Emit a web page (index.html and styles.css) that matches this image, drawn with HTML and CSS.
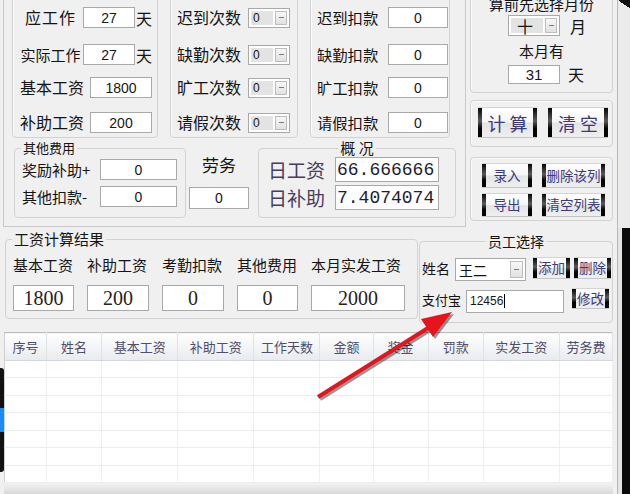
FILE: index.html
```html
<!DOCTYPE html>
<html>
<head>
    <title>工资计算</title>
    <meta charset="utf-8">
    <link rel="stylesheet" href="styles.css">
</head>
<body>
<div class="screen">
    <div class="app">
        <div class="top">
            <div class="frame">
                <div class="row-a">
                    <div class="box box-work">
                        <div class="rows">
                            <div class="row"><span class="lbl-work big">应工作</span><input class="in in-day" value="27"><span class="unit">天</span></div>
                            <div class="row"><span class="lbl-work">实际工作</span><input class="in in-day" value="27"><span class="unit">天</span></div>
                            <div class="row"><span class="lbl-pay">基本工资</span><input class="in in-pay" value="1800"></div>
                            <div class="row"><span class="lbl-pay">补助工资</span><input class="in in-pay" value="200"></div>
                        </div>
                    </div>
                    <div class="box box-count">
                        <div class="rows">
                            <div class="row"><span class="lbl-count">迟到次数</span><div class="combo combo-count"><span class="val">0</span><span class="drop"></span></div></div>
                            <div class="row"><span class="lbl-count">缺勤次数</span><div class="combo combo-count"><span class="val">0</span><span class="drop"></span></div></div>
                            <div class="row"><span class="lbl-count">旷工次数</span><div class="combo combo-count"><span class="val">0</span><span class="drop"></span></div></div>
                            <div class="row"><span class="lbl-count">请假次数</span><div class="combo combo-count"><span class="val">0</span><span class="drop"></span></div></div>
                        </div>
                    </div>
                    <div class="box box-deduct">
                        <div class="rows">
                            <div class="row"><span class="lbl-deduct">迟到扣款</span><input class="in in-deduct" value="0"></div>
                            <div class="row"><span class="lbl-deduct">缺勤扣款</span><input class="in in-deduct" value="0"></div>
                            <div class="row"><span class="lbl-deduct">旷工扣款</span><input class="in in-deduct" value="0"></div>
                            <div class="row"><span class="lbl-deduct">请假扣款</span><input class="in in-deduct" value="0"></div>
                        </div>
                    </div>
                </div>
                <div class="row-b">
                    <fieldset class="group other">
                        <legend>其他费用</legend>
                        <div class="other-body">
                            <div class="row"><span class="lbl-other">奖励补助+</span><input class="in in-other" value="0"></div>
                            <div class="row"><span class="lbl-other">其他扣款-</span><input class="in in-other" value="0"></div>
                        </div>
                    </fieldset>
                    <div class="labor">
                        <div class="labor-title">劳务</div>
                        <input class="in in-labor" value="0">
                    </div>
                    <fieldset class="group summary">
                        <legend>概 况</legend>
                        <div class="summary-body">
                            <div class="row"><span class="lbl-sum">日工资</span><input class="in in-mono" value="66.666666"></div>
                            <div class="row"><span class="lbl-sum">日补助</span><input class="in in-mono" value="7.4074074"></div>
                        </div>
                    </fieldset>
                </div>
            </div>
            <div class="side">
                <div class="box month">
                    <div class="month-title">算前先选择月份</div>
                    <div class="month-row">
                        <div class="combo combo-month"><span class="val">十</span><span class="drop"></span></div>
                        <span class="unit-m">月</span>
                    </div>
                    <div class="month-sub">本月有</div>
                    <div class="month-row days">
                        <input class="in in-month" value="31">
                        <span class="unit-d">天</span>
                    </div>
                </div>
                <div class="box calc">
                    <button class="skin btn-big">计 算</button>
                    <button class="skin btn-big">清 空</button>
                </div>
                <div class="box list">
                    <button class="skin">录入</button>
                    <button class="skin">删除该列</button>
                    <button class="skin">导出</button>
                    <button class="skin">清空列表</button>
                </div>
            </div>
        </div>

        <div class="middle">
            <fieldset class="group result">
                <legend>工资计算结果</legend>
                <div class="result-body">
                    <span>基本工资</span>
                    <span>补助工资</span>
                    <span>考勤扣款</span>
                    <span>其他费用</span>
                    <span>本月实发工资</span>
                    <input class="in in-big" value="1800">
                    <input class="in in-big" value="200">
                    <input class="in in-big" value="0">
                    <input class="in in-big" value="0">
                    <input class="in in-big" value="2000">
                </div>
            </fieldset>
            <fieldset class="group staff">
                <legend>员工选择</legend>
                <div class="staff-body">
                    <div class="staff-row">
                        <span class="lbl-name">姓名</span>
                        <div class="combo combo-name"><span class="val">王二</span><span class="drop"></span></div>
                        <button class="skin btn-sm">添加</button>
                        <button class="skin btn-sm">删除</button>
                    </div>
                    <div class="staff-row second">
                        <span class="lbl-alipay">支付宝</span>
                        <div class="in in-alipay">12456<span class="caret"></span></div>
                        <button class="skin btn-sm btn-edit">修改</button>
                    </div>
                </div>
            </fieldset>
        </div>

        <div class="table-wrap">
            <table>
                <colgroup>
                    <col style="width:42px"><col style="width:55px"><col style="width:76px"><col style="width:76px"><col style="width:66px">
                    <col style="width:53px"><col style="width:55px"><col style="width:55px"><col style="width:76px"><col style="width:53px">
                </colgroup>
                <thead>
                <tr>
                    <th>序号</th><th>姓名</th><th>基本工资</th><th>补助工资</th><th>工作天数</th>
                    <th>金额</th><th>奖金</th><th>罚款</th><th>实发工资</th><th>劳务费</th>
                </tr>
                </thead>
                <tbody>
                <tr><td></td><td></td><td></td><td></td><td></td><td></td><td></td><td></td><td></td><td></td></tr>
                <tr><td></td><td></td><td></td><td></td><td></td><td></td><td></td><td></td><td></td><td></td></tr>
                <tr><td></td><td></td><td></td><td></td><td></td><td></td><td></td><td></td><td></td><td></td></tr>
                <tr><td></td><td></td><td></td><td></td><td></td><td></td><td></td><td></td><td></td><td></td></tr>
                <tr><td></td><td></td><td></td><td></td><td></td><td></td><td></td><td></td><td></td><td></td></tr>
                <tr><td></td><td></td><td></td><td></td><td></td><td></td><td></td><td></td><td></td><td></td></tr>
                <tr><td></td><td></td><td></td><td></td><td></td><td></td><td></td><td></td><td></td><td></td></tr>
                </tbody>
            </table>
            <div class="hscroll"></div>
        </div>
    </div>
    <div class="edge">
        <div class="edge-top"></div>
        <div class="edge-bottom"></div>
    </div>

    <div class="desk-icon"></div>

    <!-- red marker arrow pointing at the alipay field -->
    <svg class="arrow" width="630" height="494" viewBox="0 0 630 494">
        <g transform="translate(2 2)" opacity="0.4">
            <line x1="318" y1="397" x2="428" y2="328" stroke="#000" stroke-width="4"/>
            <polygon points="452,312 433,337 421,319" fill="#000"/>
        </g>
        <line x1="318" y1="397" x2="428" y2="328" stroke="#e8141b" stroke-width="4"/>
        <polygon points="452,312 433,337 421,319" fill="#e8141b"/>
    </svg>
</div>
</body>
</html>
```

FILE: styles.css
```css
/* Page */
body {
    margin: 0;
    font-family: "Noto Sans CJK SC", sans-serif;
    font-size: 15px;
    color: #141414;
}

.screen {
    position: relative;
    display: flex;
    width: 630px;
    height: 494px;
    overflow: hidden;
    background: #f0f0f0;
}

.app {
    width: 617px;
    height: 494px;
    border-right: 1px solid #b7b7b7;
    background: #f0f0f0;
}

/* Outside of the window */
.edge {
    flex: 1;
    display: flex;
    flex-direction: column;
}

.edge-top {
    height: 228px;
    background: linear-gradient(215deg, #111 0 7px, #ebebeb 7px);
}

.edge-bottom {
    flex: 1;
    background: linear-gradient(90deg, #e4e4e4 0 4px, #0b0b0b 4px);
}

.desk-icon {
    position: absolute;
    left: 0;
    top: 368px;
    width: 4px;
    height: 104px;
    border-radius: 0 3px 3px 0;
    background: linear-gradient(#111 0 38%, #1b8cf2 38% 62%, #111 62%);
}

.arrow {
    position: absolute;
    left: 0;
    top: 0;
    pointer-events: none;
}

/* Boxes */
.box {
    box-sizing: border-box;
    border: 1px solid #d2d2d2;
    border-radius: 4px;
    box-shadow: inset 1px 1px 0 #fbfbfb;
}

.group {
    box-sizing: border-box;
    padding: 0;
    min-width: 0;
    border: 1px solid #d2d2d2;
    border-radius: 4px;
}

legend {
    padding: 0 2px;
    font-size: 13px;
    line-height: 16px;
}

/* Inputs */
.in {
    box-sizing: border-box;
    margin: 0;
    padding: 0;
    border: 1px solid #a9a9a9;
    background: #fff;
    color: #161616;
    font: 14px "Liberation Sans", sans-serif;
    text-align: center;
    outline: none;
}

.combo {
    box-sizing: border-box;
    display: flex;
    gap: 2px;
    padding: 2px;
    border: 1px solid #a9a9a9;
    background: #fff;
}

.combo .val {
    flex: 1;
    display: flex;
    align-items: center;
    padding-left: 2px;
    background: #e3e3e3;
    font: 12px "Liberation Sans", sans-serif;
}

.combo .drop {
    box-sizing: border-box;
    width: 12px;
    display: flex;
    align-items: center;
    justify-content: center;
    border: 1px solid #bdbdbd;
    background: linear-gradient(#f8f8f8, #e1e1e1);
}

.combo .drop::after {
    content: "";
    width: 5px;
    height: 1px;
    background: #7a7a7a;
}

/* Skinned buttons */
.skin {
    box-sizing: border-box;
    margin: 0;
    padding: 0;
    border: none;
    border-top: 1px solid #d4d4d4;
    border-bottom: 1px solid #c4c4c4;
    color: #3b3b7a;
    font-family: "Noto Sans CJK SC", sans-serif;
    font-size: 13.5px;
    line-height: 1;
    white-space: nowrap;
    overflow: hidden;
    background:
        linear-gradient(#050505, #5a5a5a 45%, #050505 70%) left / 4px 100% no-repeat,
        linear-gradient(#050505, #5a5a5a 45%, #050505 70%) right / 4px 100% no-repeat,
        linear-gradient(#ffffff, #f6f6f6 48%, #e4e4e4 52%, #efefef);
}

.btn-big {
    height: 31px;
    font-size: 18px;
}

/* Top area */
.top {
    display: flex;
    height: 227px;
}

.frame {
    box-sizing: border-box;
    width: 463px;
    height: 227px;
    margin-left: 3px;
    border: 1px solid #c9c9c9;
    border-top: none;
}

.row-a {
    display: flex;
    gap: 12px;
    margin: -10px 0 0 8px;
}

.box-work { width: 146px; height: 148px; }
.box-count { width: 128px; height: 148px; }
.box-deduct { width: 140px; height: 148px; }

.rows {
    display: grid;
    grid-template-rows: 37px 33px 35px 21px;
    padding: 16px 0 0 5px;
}

.box-count .rows,
.box-deduct .rows {
    padding-left: 6px;
}

.row {
    display: flex;
    align-items: center;
    height: 21px;
}

.lbl-work {
    width: 65px;
    text-align: center;
    font-size: 15px;
    line-height: 21px;
}

.lbl-work.big {
    font-size: 16px;
    letter-spacing: 1px;
}

.in-day {
    width: 52px;
    height: 21px;
}

.unit {
    margin-left: 1px;
    font-size: 16px;
}

.lbl-pay {
    width: 70px;
    margin-left: 2px;
    font-size: 16px;
    line-height: 21px;
}

.in-pay {
    width: 62px;
    height: 21px;
}

.lbl-count {
    width: 71px;
    font-size: 16px;
    line-height: 21px;
}

.combo-count {
    width: 42px;
    height: 20px;
}

.lbl-deduct {
    width: 71px;
    font-size: 15.3px;
    line-height: 21px;
}

.in-deduct {
    width: 60px;
    height: 21px;
}

/* Second row of the top area */
.row-b {
    display: flex;
    align-items: flex-start;
    margin-top: 2px;
}

.other {
    width: 172px;
    height: 78px;
    margin: 0 0 0 10px;
}

.other legend {
    margin-left: 6px;
}

.other-body {
    display: grid;
    row-gap: 6px;
    padding: 3px 0 0 7px;
}

.lbl-other {
    width: 78px;
    font-size: 15px;
    line-height: 21px;
}

.in-other {
    width: 77px;
    height: 21px;
}

.labor {
    display: flex;
    flex-direction: column;
    align-items: center;
    width: 60px;
    margin-left: 3px;
}

.labor-title {
    margin-top: 15px;
    font-size: 17px;
    line-height: 20px;
}

.in-labor {
    width: 60px;
    height: 22px;
    margin-top: 12px;
}

.summary {
    width: 198px;
    height: 78px;
    margin: 0 0 0 9px;
}

.summary legend {
    margin: 0 auto;
    font-size: 15px;
}

.summary-body {
    display: grid;
    row-gap: 3px;
    padding: 1px 0 0 9px;
}

.summary-body .row {
    height: 25px;
}

.lbl-sum {
    width: 67px;
    color: #4a3c5e;
    font-size: 19px;
    line-height: 25px;
}

.in-mono {
    width: 104px;
    height: 25px;
    padding-left: 1px;
    text-align: left;
    color: #1d1d33;
    font: 18px "Liberation Mono", monospace;
}

/* Side column */
.side {
    width: 143px;
    margin-left: 4px;
}

.month {
    height: 103px;
    margin-top: -10px;
    padding-top: 4px;
    text-align: center;
}

.month-title,
.month-sub {
    font-size: 15px;
    line-height: 18px;
}

.month-sub {
    margin-top: 6px;
}

.month-row {
    display: flex;
    align-items: center;
    margin-top: 2px;
    padding-left: 37px;
}

.combo-month {
    width: 52px;
    height: 21px;
}

.combo-month .val {
    font: 16px "Noto Sans CJK SC", sans-serif;
    padding-left: 6px;
}

.unit-m {
    margin-left: 10px;
    font-size: 16px;
    line-height: 20px;
}

.month-row.days {
    margin-top: 5px;
}

.in-month {
    width: 52px;
    height: 19px;
    font-size: 15px;
}

.unit-d {
    margin-left: 8px;
    font-size: 16px;
    line-height: 19px;
}

.calc {
    display: flex;
    gap: 11px;
    height: 47px;
    margin-top: 7px;
    padding: 6px 0 0 7px;
}

.calc .skin:first-child { width: 59px; }
.calc .skin:last-child { width: 60px; }

.list {
    display: grid;
    grid-template-columns: 50px 63px;
    grid-template-rows: 25px 24px;
    gap: 5px 10px;
    height: 64px;
    margin-top: 10px;
    padding: 5px 0 0 11px;
}

/* Results and staff */
.middle {
    display: flex;
    align-items: flex-start;
    height: 105px;
}

.result {
    width: 413px;
    height: 90px;
    margin: 2px 0 0 5px;
}

.result legend {
    margin-left: 6px;
    font-size: 15px;
    line-height: 20px;
}

.result-body {
    display: grid;
    grid-template-columns: 61px 62px 62px 61px 94px;
    column-gap: 13px;
    row-gap: 10px;
    padding: 6px 0 0 7px;
    font-size: 15px;
    line-height: 20px;
    white-space: nowrap;
}

.in-big {
    width: 100%;
    height: 26px;
    color: #2a2218;
    font: 20px "Liberation Serif", serif;
}

.staff {
    width: 194px;
    height: 91px;
    margin: 5px 0 0 1px;
}

.staff legend {
    margin: 0 auto;
    font-size: 14px;
    line-height: 18px;
}

.staff-body {
    padding: 7px 0 0 2px;
}

.staff-row {
    display: flex;
    align-items: flex-start;
    height: 23px;
}

.staff-row.second {
    height: 24px;
    margin-top: 8px;
}

.lbl-name {
    width: 33px;
    font-size: 14px;
    line-height: 23px;
}

.combo-name {
    width: 71px;
    height: 23px;
    margin-top: 1px;
}

.combo-name .val {
    background: #fff;
    font: 14px "Noto Sans CJK SC", sans-serif;
    padding-left: 1px;
}

.combo-name .drop {
    width: 13px;
}

.btn-sm {
    width: 37px;
    height: 22px;
    margin-left: 4px;
    font-size: 13.5px;
}

.combo-name + .btn-sm {
    margin-left: 7px;
}

.lbl-alipay {
    width: 44px;
    font-size: 13px;
    line-height: 24px;
}

.in-alipay {
    width: 98px;
    height: 23px;
    margin-top: 2px;
    padding-left: 3px;
    text-align: left;
    font-size: 12px;
    line-height: 21px;
}

.caret {
    display: inline-block;
    width: 1px;
    height: 14px;
    margin-left: 1px;
    vertical-align: -3px;
    background: #000;
}

.btn-edit {
    height: 21px;
    margin-left: 8px;
}

/* Table */
.table-wrap {
    margin-left: 4px;
    width: 609px;
}

table {
    border-collapse: collapse;
    table-layout: fixed;
    width: 609px;
    background: #fff;
    border-top: 1px solid #bdbdbd;
    border-left: 1px solid #cfcfcf;
    border-right: 1px solid #b3b8c0;
}

th {
    height: 27px;
    padding: 0;
    border-right: 1px solid #e0e2e6;
    border-bottom: 1px solid #d3d7dd;
    background: linear-gradient(#fefefe, #f4f5f7 50%, #e8eaee);
    color: #4d4d6c;
    font-size: 13px;
    font-weight: normal;
}

tbody tr {
    height: 17px;
}

tbody tr:nth-child(even) {
    height: 18px;
}

td {
    padding: 0;
    border-right: 1px solid #efefef;
    border-bottom: 1px solid #ececec;
}

.hscroll {
    height: 11px;
    border-bottom: 2px solid #9c9c9c;
    background: linear-gradient(#f3f3f3, #d9d9d9);
}
```
